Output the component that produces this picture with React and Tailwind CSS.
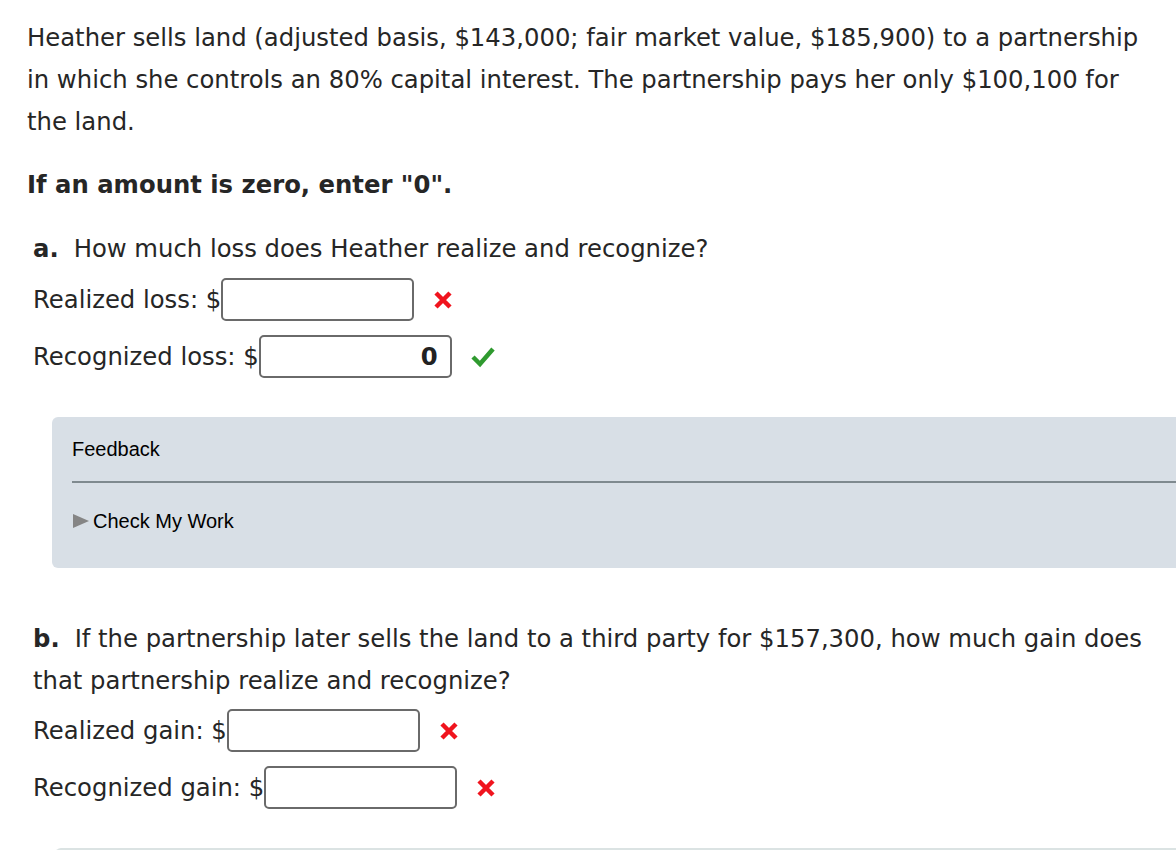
import React from 'react';

function RedX() {
  return (
    <svg width="20" height="20" viewBox="0 0 20 20" className="shrink-0">
      <path d="M3 3 L17 17 M17 3 L3 17" stroke="#f0141e" strokeWidth="4.5" strokeLinecap="butt" />
    </svg>
  );
}

function GreenCheck() {
  return (
    <svg width="24" height="22" viewBox="0 0 24 22" className="shrink-0">
      <path d="M2 11 L9 18 L22 3" stroke="#2f9a2f" strokeWidth="4.5" fill="none" strokeLinejoin="miter" />
    </svg>
  );
}

function AnswerRow({ label, value, mark }) {
  return (
    <div className="flex items-center h-[43px]">
      <span>{label}: $</span>
      <div className="w-[193px] h-[43px] border-2 border-[#6a6a6a] rounded-[5px] bg-white flex items-center justify-end pr-[12px] font-bold text-[#222]">
        {value}
      </div>
      <div className="ml-[19px] flex items-center">
        {mark === 'x' ? <RedX /> : <GreenCheck />}
      </div>
    </div>
  );
}

export default function App() {
  return (
    <div
      className="min-h-screen bg-white text-[#262626] text-[24.3px] leading-[42px] pl-[27px] pt-[17px] overflow-hidden"
      style={{ fontFamily: '"DejaVu Sans", Verdana, sans-serif' }}
    >
      {/* Problem statement */}
      <p className="max-w-[1118px]">
        Heather sells land (adjusted basis, $143,000; fair market value, $185,900) to a partnership in which she controls an 80% capital interest. The partnership pays her only $100,100 for the land.
      </p>
      <p className="font-bold mt-[21px]">If an amount is zero, enter "0".</p>

      {/* Part a */}
      <div className="ml-[6px] mt-[22px]">
        <p>
          <span className="font-bold mr-[15px]">a.</span>How much loss does Heather realize and recognize?
        </p>
        <div className="flex flex-col gap-[14px] mt-[8px]">
          <AnswerRow label="Realized loss" value="" mark="x" />
          <AnswerRow label="Recognized loss" value="0" mark="check" />
        </div>
      </div>

      {/* Feedback */}
      <div
        className="ml-[25px] mt-[39px] h-[151px] bg-[#d8dfe6] rounded-l-[6px] pl-[20px] pt-[18px]"
        style={{ fontFamily: '"Liberation Sans", Arial, sans-serif' }}
      >
        <div className="text-[20px] leading-[28px] text-black">Feedback</div>
        <div className="h-[2px] bg-[#7f8a8f] mt-[18px]"></div>
        <div className="flex items-center mt-[24px] text-[20px] leading-[28px] text-black">
          <svg width="16" height="14" viewBox="0 0 16 14" className="mr-[4px] ml-[1px]">
            <path d="M0 0 L16 7 L0 14 Z" fill="#858585" />
          </svg>
          Check My Work
        </div>
      </div>

      {/* Part b */}
      <div className="ml-[6px] mt-[50px] max-w-[1122px]">
        <p>
          <span className="font-bold mr-[15px]">b.</span>If the partnership later sells the land to a third party for $157,300, how much gain does that partnership realize and recognize?
        </p>
        <div className="flex flex-col gap-[14px] mt-[7px]">
          <AnswerRow label="Realized gain" value="" mark="x" />
          <AnswerRow label="Recognized gain" value="" mark="x" />
        </div>
      </div>

      <div className="ml-[28px] mt-[39px] h-[40px] border-t-2 border-l-2 border-[#dbe3e3] rounded-tl-[6px]"></div>
    </div>
  );
}
